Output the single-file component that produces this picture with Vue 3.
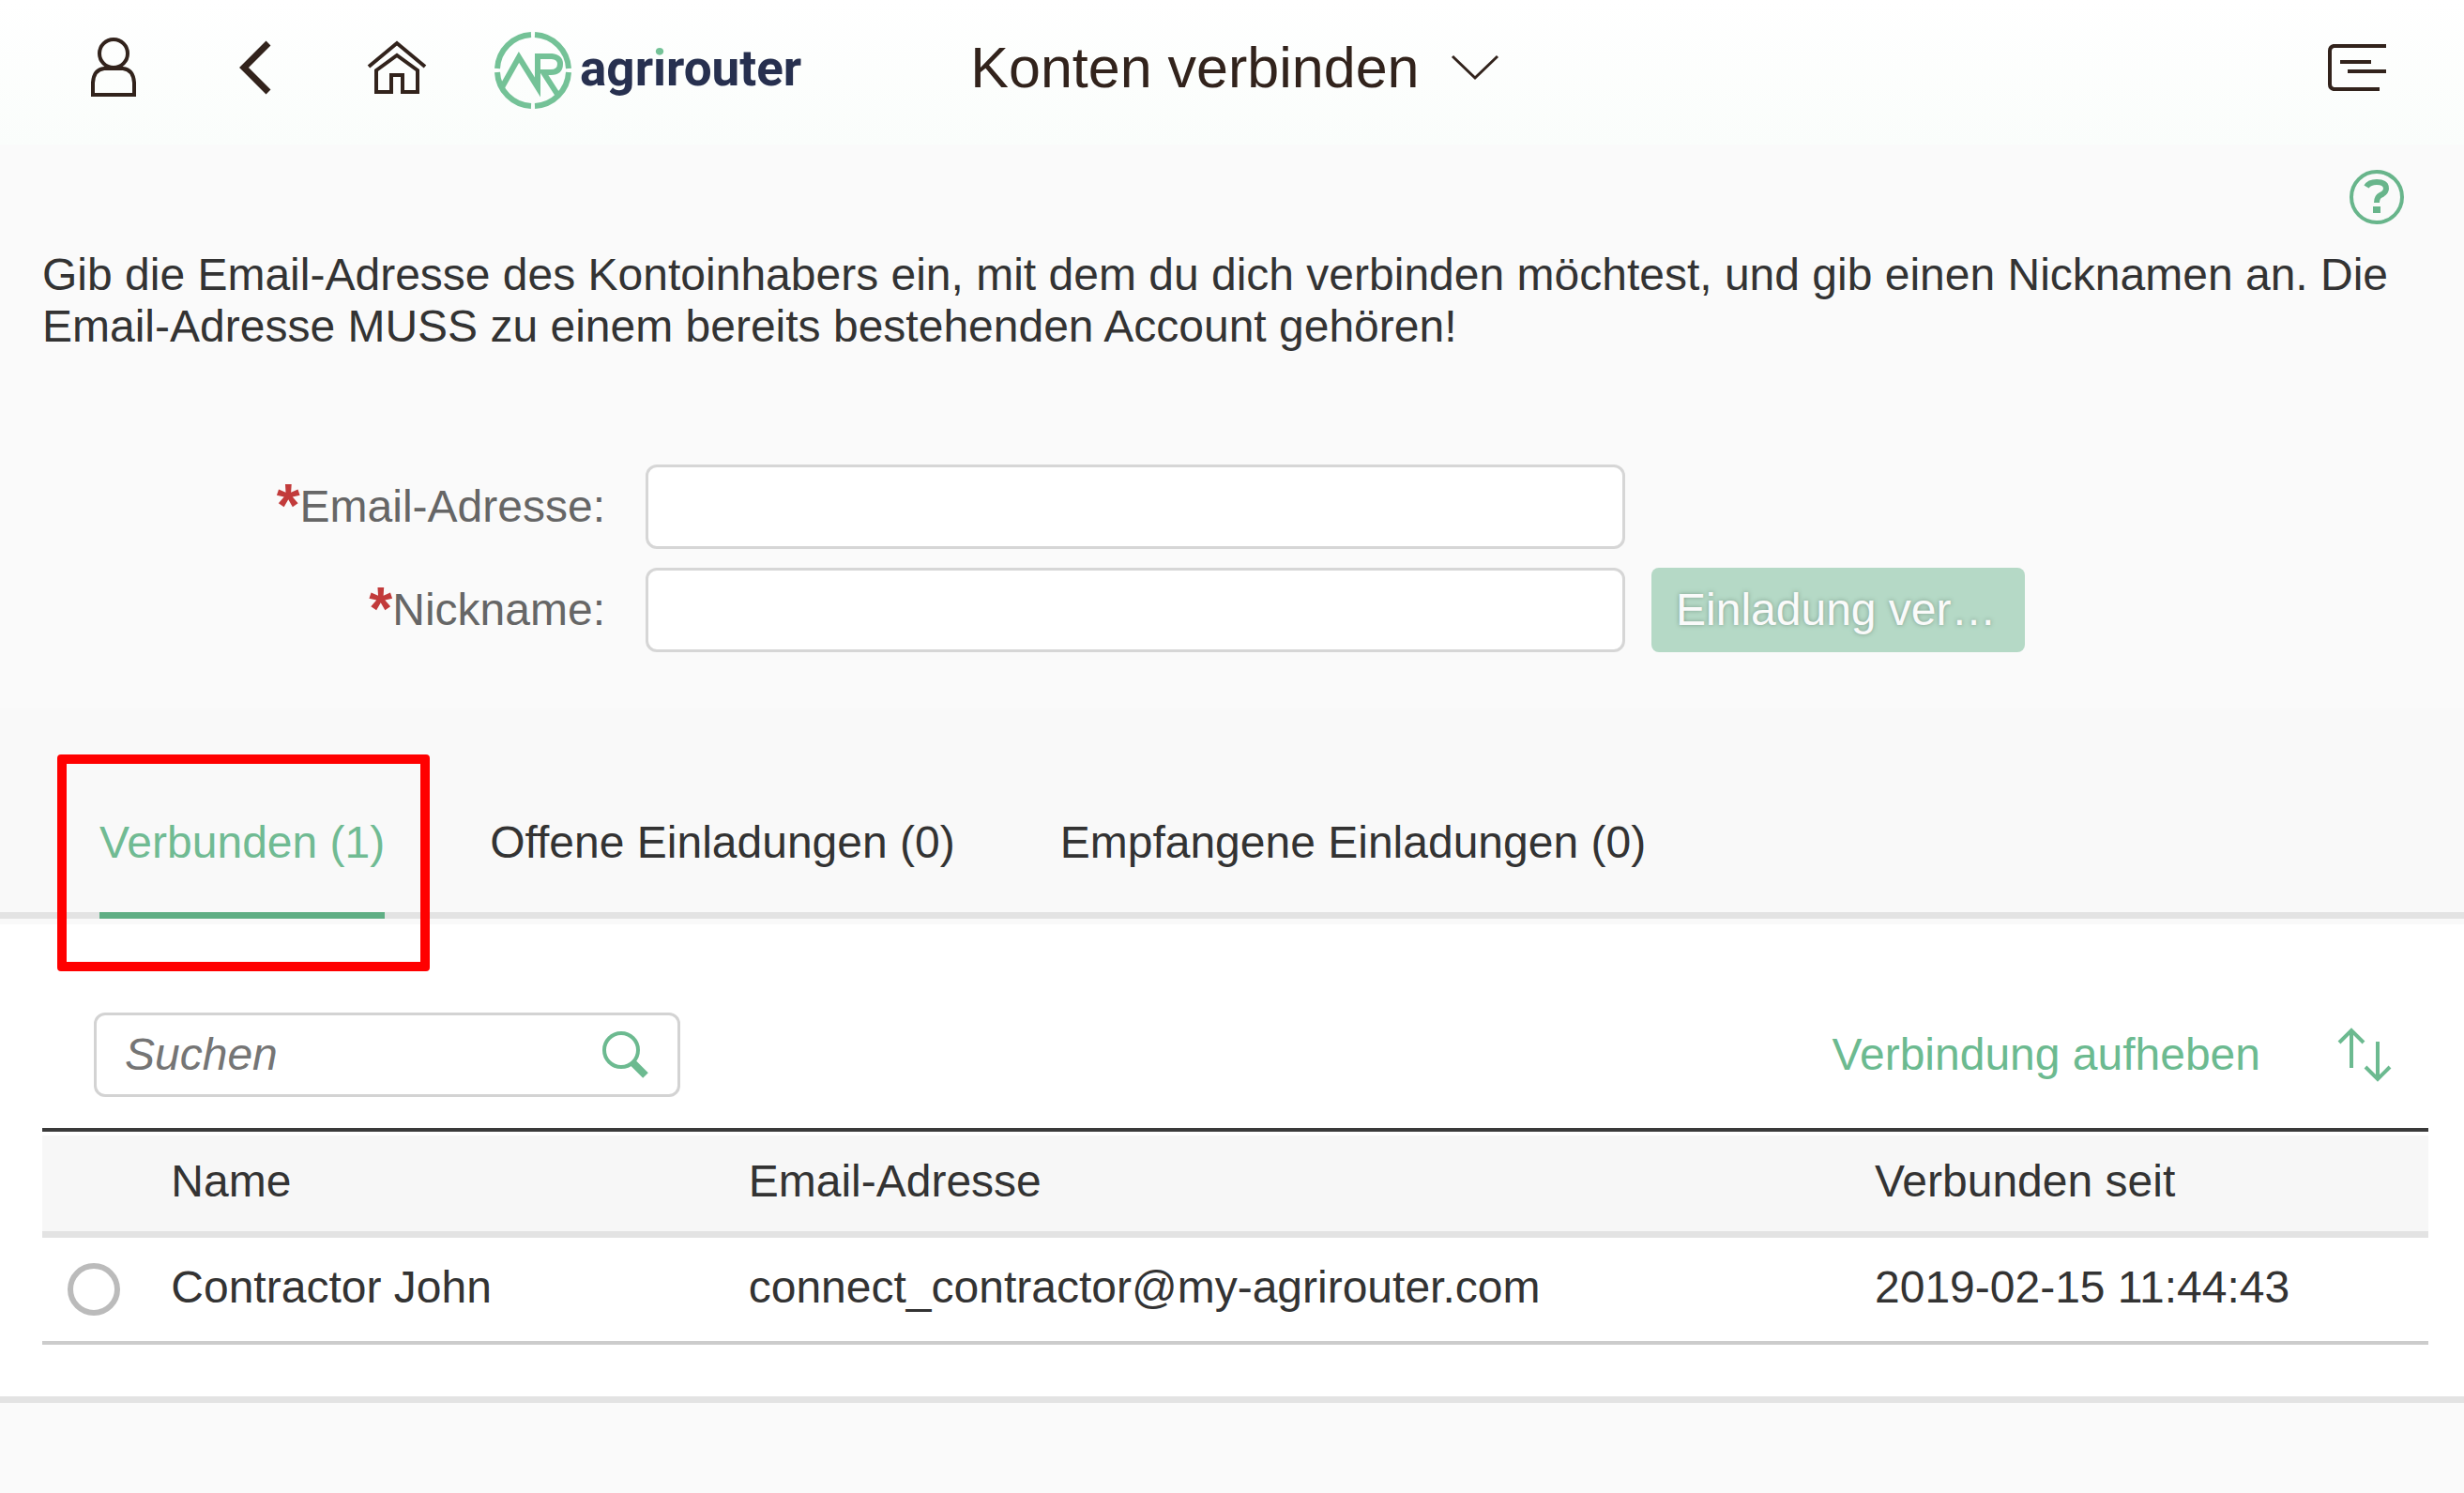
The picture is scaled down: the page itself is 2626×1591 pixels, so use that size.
<script setup>
import { ref } from 'vue'

const email = ref('')
const nickname = ref('')
const query = ref('')
const selected = ref(null)
const activeTab = ref('connected')

const tabs = [
  { id: 'connected', label: 'Verbunden (1)' },
  { id: 'open', label: 'Offene Einladungen (0)' },
  { id: 'received', label: 'Empfangene Einladungen (0)' },
]

const accounts = [
  {
    id: 1,
    name: 'Contractor John',
    email: 'connect_contractor@my-agrirouter.com',
    since: '2019-02-15 11:44:43',
  },
]
</script>

<template>
  <div class="page">
    <header class="shell">
      <button class="icon-btn user" type="button" aria-label="Profil">
        <svg width="50" height="64" viewBox="0 0 50 64">
          <ellipse cx="25" cy="17" rx="15" ry="15" />
          <path d="M3 61V48Q4 34 15 33H35Q46 34 47 48V61Z" />
        </svg>
      </button>
      <button class="icon-btn back" type="button" aria-label="Zurück">
        <svg width="34" height="58" viewBox="0 0 34 58">
          <path class="bold" d="M31 3L5 29L31 55" />
        </svg>
      </button>
      <button class="icon-btn home" type="button" aria-label="Startseite">
        <svg width="64" height="58" viewBox="0 0 64 58">
          <path d="M2 28L32 3L62 28" />
          <path d="M10 32L32 16L54 32V55H38V37H26V55H10Z" />
        </svg>
      </button>
      <a class="brand" href="#" aria-label="agrirouter">
        <svg width="84" height="84" viewBox="0 0 84 84">
          <path d="M40 4A38 38 0 0 0 4 40M4 44A38 38 0 0 0 40 80M44 80A38 38 0 0 0 80 44M80 40A38 38 0 0 0 44 4" />
          <path d="M9 60L27 28L47 60V27H62Q71 28 71 35Q71 44 61 44H53L69 69" />
        </svg>
        <span class="wordmark">agr<span class="dot-i">i</span>router</span>
      </a>
      <button class="title" type="button">
        <span>Konten verbinden</span>
        <svg width="52" height="28" viewBox="0 0 52 28">
          <path d="M2 2L26 25L50 2" />
        </svg>
      </button>
      <button class="icon-btn menu" type="button" aria-label="Menü">
        <svg width="64" height="50" viewBox="0 0 64 50">
          <path d="M62 2H6Q2 3 2 7V43Q2 47 6 48H55M13 19H46M21 29H62" />
        </svg>
      </button>
    </header>

    <main>
      <section class="intro">
        <div class="help-row">
          <button class="icon-btn help" type="button" aria-label="Hilfe">
            <svg width="58" height="58" viewBox="0 0 58 58">
              <circle cx="29" cy="29" r="27" />
              <path class="mark" d="M18 18Q21 13 29 13Q39 13 39 20Q39 24 33 27Q29 29 29 35" />
              <rect x="25" y="39" width="8" height="7" />
            </svg>
          </button>
        </div>
        <p class="lead">
          Gib die Email-Adresse des Kontoinhabers ein, mit dem du dich verbinden möchtest, und gib einen
          Nicknamen an. Die Email-Adresse MUSS zu einem bereits bestehenden Account gehören!
        </p>
        <form class="invite" @submit.prevent>
          <label for="email"><b>*</b>Email-Adresse:</label>
          <input id="email" v-model="email" type="text" />
          <label for="nickname"><b>*</b>Nickname:</label>
          <input id="nickname" v-model="nickname" type="text" />
          <button class="send" type="submit">Einladung ver…</button>
        </form>
      </section>

      <div class="tab-bar">
        <div class="tabs" role="tablist">
          <button
            v-for="tab in tabs"
            :key="tab.id"
            class="tab"
            :class="{ active: tab.id === activeTab }"
            type="button"
            role="tab"
            :aria-selected="tab.id === activeTab"
            @click="activeTab = tab.id"
          >
            {{ tab.label }}
            <span v-if="tab.id === 'connected'" class="highlight"></span>
          </button>
        </div>
      </div>

      <section class="accounts">
        <div class="toolbar">
          <div class="search">
            <input v-model="query" type="text" placeholder="Suchen" aria-label="Suchen" />
            <button class="icon-btn find" type="button" aria-label="Suche starten">
              <svg width="50" height="50" viewBox="0 0 50 50">
                <circle cx="20" cy="20" r="18" />
                <path class="handle" d="M32 33L46 47" />
              </svg>
            </button>
          </div>
          <div class="actions">
            <button class="disconnect" type="button">Verbindung aufheben</button>
            <button class="icon-btn sort" type="button" aria-label="Sortieren">
              <svg width="58" height="58" viewBox="0 0 58 58">
                <path d="M15 43V3M2 16L15 3L28 16M43 15V55M30 42L43 55L56 42" />
              </svg>
            </button>
          </div>
        </div>
        <div class="table-frame">
          <table>
            <colgroup>
              <col class="col-pick" />
              <col class="col-name" />
              <col class="col-email" />
              <col />
            </colgroup>
            <thead>
              <tr>
                <th></th>
                <th scope="col">Name</th>
                <th scope="col">Email-Adresse</th>
                <th scope="col">Verbunden seit</th>
              </tr>
            </thead>
            <tbody>
              <tr v-for="account in accounts" :key="account.id">
                <td class="pick">
                  <input v-model="selected" type="radio" name="account" :value="account.id" :aria-label="account.name" />
                </td>
                <td>{{ account.name }}</td>
                <td>{{ account.email }}</td>
                <td>{{ account.since }}</td>
              </tr>
            </tbody>
          </table>
        </div>
      </section>
    </main>
  </div>
</template>

<style>
body {
  margin: 0;
  background: #fafafa;
}
</style>

<style scoped>
.page {
  min-height: 100vh;
  background: #fafafa;
  color: #333;
  font-family: "Liberation Sans", Arial, sans-serif;
  font-size: 48px;
  line-height: 56px;
}

.page * {
  box-sizing: border-box;
}

button,
input {
  margin: 0;
  padding: 0;
  border: 0;
  background: none;
  color: inherit;
  font: inherit;
}

svg {
  display: block;
  fill: none;
  stroke: currentColor;
  stroke-width: 4;
}

.shell {
  display: flex;
  align-items: center;
  height: 154px;
  padding: 0 81px 10px 96px;
  background: linear-gradient(#fff, #fafdfb);
  color: #32231c;
}

.icon-btn {
  flex: none;
}

.back {
  margin-left: 109px;
}

.back .bold {
  stroke-width: 7;
}

.home {
  margin-left: 102px;
}

.brand {
  display: flex;
  align-items: center;
  gap: 8px;
  margin-left: 71px;
  padding-top: 5px;
  color: #27304f;
  text-decoration: none;
}

.brand svg {
  flex: none;
  stroke: #74c297;
  stroke-width: 6;
}

.wordmark {
  padding-bottom: 4px;
  font-family: Roboto, sans-serif;
  font-size: 53px;
  font-weight: 700;
}

.dot-i {
  background: linear-gradient(#74c297 20px, #27304f 20px);
  background-clip: text;
  color: transparent;
}

.title {
  display: flex;
  align-items: center;
  gap: 34px;
  margin-left: 180px;
  font-size: 61px;
  white-space: nowrap;
}

.title svg {
  stroke-width: 3;
}

.menu {
  margin-left: auto;
}

.intro {
  padding: 27px 0 60px;
}

.help-row {
  display: flex;
  justify-content: flex-end;
  padding-right: 64px;
  color: #68b58b;
}

.help .mark {
  stroke-width: 6;
}

.help rect {
  fill: currentColor;
  stroke: none;
}

.lead {
  margin: 26px 45px 0;
  line-height: 55px;
}

.invite {
  display: grid;
  grid-template-columns: minmax(0, 660fr) minmax(0, 1044fr) minmax(0, 398fr) minmax(0, 440fr);
  align-items: center;
  gap: 20px 28px;
  margin-top: 120px;
}

.invite label {
  grid-column: 1;
  padding-right: 15px;
  color: #666;
  text-align: right;
}

.invite b {
  color: #c23b3b;
  font-size: 64px;
  line-height: 48px;
  vertical-align: -5px;
}

.invite input {
  width: 100%;
  height: 90px;
  padding: 0 28px;
  border: 3px solid #d6d6d6;
  border-radius: 12px;
  background: #fff;
}

.send {
  height: 90px;
  padding: 0 26px;
  border-radius: 8px;
  background: #b5d9c6;
  color: #fafafa;
  text-align: left;
  text-shadow: 0 0 5px #7d9c8b;
  white-space: nowrap;
}

.tab-bar {
  padding-bottom: 6px;
  background: #f9f9f9;
}

.tabs {
  display: flex;
  gap: 112px;
  padding: 0 106px;
  box-shadow: inset 0 -7px #e3e3e3;
}

.tab {
  position: relative;
  padding: 115px 0 46px;
  border-bottom: 7px solid transparent;
  white-space: nowrap;
}

.tab.active {
  border-bottom-color: #5fae84;
  color: #70bb93;
}

.highlight {
  position: absolute;
  inset: 49px -48px -63px -45px;
  border: 10px solid #f00;
  border-radius: 4px;
  pointer-events: none;
}

.accounts {
  padding: 94px 38px 55px 45px;
  border-bottom: 7px solid #e3e3e3;
  background: #fff;
}

.toolbar {
  display: flex;
  align-items: center;
  justify-content: space-between;
  padding: 0 39px 33px 55px;
}

.search {
  display: flex;
  align-items: center;
  width: 625px;
  height: 90px;
  padding: 0 30px;
  border: 3px solid #d3d3d3;
  border-radius: 12px;
}

.search input {
  flex: 1;
  min-width: 0;
  outline: 0;
}

.search input::placeholder {
  color: #757575;
  font-style: italic;
  opacity: 1;
}

.find,
.actions {
  color: #6cba90;
}

.find .handle {
  stroke-width: 8;
}

.actions {
  display: flex;
  align-items: center;
  gap: 82px;
}

.table-frame {
  padding-top: 4px;
  border-top: 4px solid #3a3a3a;
}

table {
  width: 100%;
  border-collapse: separate;
  border-spacing: 0;
  table-layout: fixed;
}

.col-pick {
  width: 5.4%;
}

.col-name {
  width: 24.2%;
}

.col-email {
  width: 47.2%;
}

th,
td {
  padding: 0 0 4px;
  font-weight: 400;
  text-align: left;
  white-space: nowrap;
}

th {
  height: 109px;
  border-bottom: 7px solid #e3e3e3;
  background: #f7f7f7;
}

td {
  height: 114px;
  border-bottom: 4px solid #ccc;
}

.pick {
  padding: 0 0 0 27px;
}

.pick input {
  display: block;
  width: 56px;
  height: 56px;
  border: 6px solid #bbb;
  border-radius: 50%;
  appearance: none;
}

.pick input:checked {
  background: radial-gradient(#5fae84 45%, transparent 50%);
}
</style>
